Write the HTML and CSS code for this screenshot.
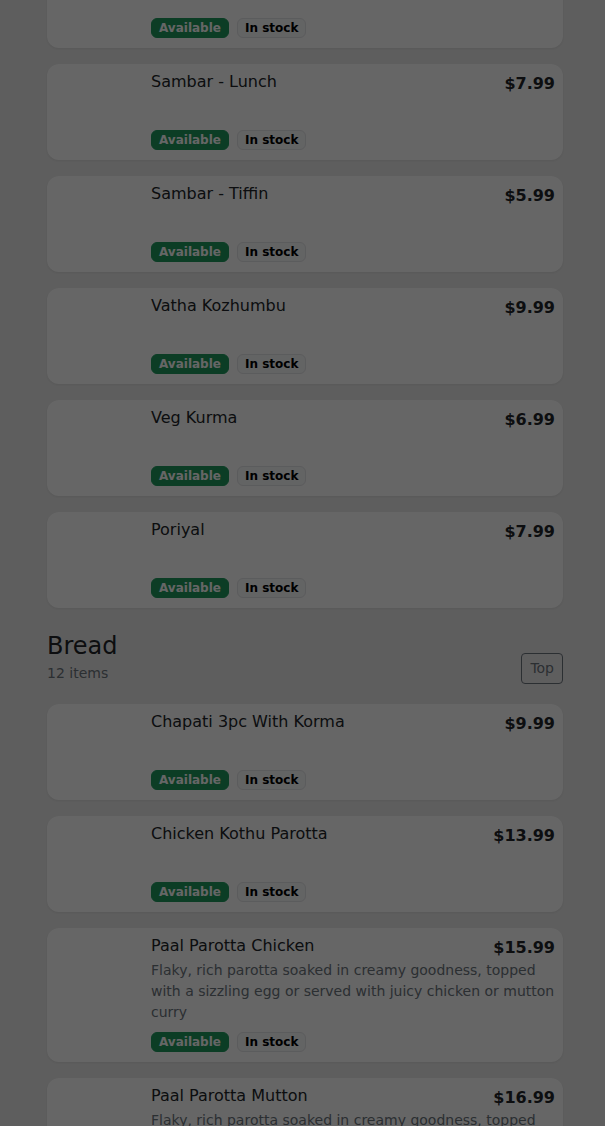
FILE: index.html
```html
<!DOCTYPE html>
<html lang="en">
<head>
    <meta charset="UTF-8">
    <meta name="viewport" content="width=device-width, initial-scale=1.0">
    <title>Menu</title>
    <link rel="stylesheet" href="styles.css">
</head>
<body>

    <main class="menu">

        <!-- Curries -->
        <section class="category">
            <div class="item-list first">
                <div class="item">
                    <div class="item-img"></div>
                    <div class="item-body">
                        <div class="item-head">
                            <span class="item-name">Rasam</span>
                            <span class="item-price">$5.99</span>
                        </div>
                        <div class="badges">
                            <span class="badge badge-ok">Available</span>
                            <span class="badge badge-light">In stock</span>
                        </div>
                    </div>
                </div>
                <div class="item">
                    <div class="item-img"></div>
                    <div class="item-body">
                        <div class="item-head">
                            <span class="item-name">Sambar - Lunch</span>
                            <span class="item-price">$7.99</span>
                        </div>
                        <div class="badges">
                            <span class="badge badge-ok">Available</span>
                            <span class="badge badge-light">In stock</span>
                        </div>
                    </div>
                </div>
                <div class="item">
                    <div class="item-img"></div>
                    <div class="item-body">
                        <div class="item-head">
                            <span class="item-name">Sambar - Tiffin</span>
                            <span class="item-price">$5.99</span>
                        </div>
                        <div class="badges">
                            <span class="badge badge-ok">Available</span>
                            <span class="badge badge-light">In stock</span>
                        </div>
                    </div>
                </div>
                <div class="item">
                    <div class="item-img"></div>
                    <div class="item-body">
                        <div class="item-head">
                            <span class="item-name">Vatha Kozhumbu</span>
                            <span class="item-price">$9.99</span>
                        </div>
                        <div class="badges">
                            <span class="badge badge-ok">Available</span>
                            <span class="badge badge-light">In stock</span>
                        </div>
                    </div>
                </div>
                <div class="item">
                    <div class="item-img"></div>
                    <div class="item-body">
                        <div class="item-head">
                            <span class="item-name">Veg Kurma</span>
                            <span class="item-price">$6.99</span>
                        </div>
                        <div class="badges">
                            <span class="badge badge-ok">Available</span>
                            <span class="badge badge-light">In stock</span>
                        </div>
                    </div>
                </div>
                <div class="item">
                    <div class="item-img"></div>
                    <div class="item-body">
                        <div class="item-head">
                            <span class="item-name">Poriyal</span>
                            <span class="item-price">$7.99</span>
                        </div>
                        <div class="badges">
                            <span class="badge badge-ok">Available</span>
                            <span class="badge badge-light">In stock</span>
                        </div>
                    </div>
                </div>
            </div>
        </section>

        <!-- Bread -->
        <section class="category">
            <div class="category-head">
                <div>
                    <h2>Bread</h2>
                    <p class="count">12 items</p>
                </div>
                <button class="btn-top">Top</button>
            </div>
            <div class="item-list">
                <div class="item">
                    <div class="item-img"></div>
                    <div class="item-body">
                        <div class="item-head">
                            <span class="item-name">Chapati 3pc With Korma</span>
                            <span class="item-price">$9.99</span>
                        </div>
                        <div class="badges">
                            <span class="badge badge-ok">Available</span>
                            <span class="badge badge-light">In stock</span>
                        </div>
                    </div>
                </div>
                <div class="item">
                    <div class="item-img"></div>
                    <div class="item-body">
                        <div class="item-head">
                            <span class="item-name">Chicken Kothu Parotta</span>
                            <span class="item-price">$13.99</span>
                        </div>
                        <div class="badges">
                            <span class="badge badge-ok">Available</span>
                            <span class="badge badge-light">In stock</span>
                        </div>
                    </div>
                </div>
                <div class="item">
                    <div class="item-img"></div>
                    <div class="item-body">
                        <div class="item-head">
                            <span class="item-name">Paal Parotta Chicken</span>
                            <span class="item-price">$15.99</span>
                        </div>
                        <p class="item-desc">Flaky, rich parotta soaked in creamy goodness, topped with a sizzling egg or served with juicy chicken or mutton curry</p>
                        <div class="badges">
                            <span class="badge badge-ok">Available</span>
                            <span class="badge badge-light">In stock</span>
                        </div>
                    </div>
                </div>
                <div class="item">
                    <div class="item-img"></div>
                    <div class="item-body">
                        <div class="item-head">
                            <span class="item-name">Paal Parotta Mutton</span>
                            <span class="item-price">$16.99</span>
                        </div>
                        <p class="item-desc">Flaky, rich parotta soaked in creamy goodness, topped with a sizzling egg or served with juicy chicken or mutton curry</p>
                        <div class="badges">
                            <span class="badge badge-ok">Available</span>
                            <span class="badge badge-light">In stock</span>
                        </div>
                    </div>
                </div>
            </div>
        </section>

    </main>

    <!-- Dim backdrop (modal open) -->
    <div class="backdrop"></div>

</body>
</html>
```

FILE: styles.css
```css
body {
    font-family: "DejaVu Sans", sans-serif;
    margin: 0;
    padding: 0;
    background-color: #ececec;
    color: #212529;
}

.menu {
    padding: 0 42px 40px 47px;
}

.item-list {
    display: flex;
    flex-direction: column;
    gap: 16px;
}

.item-list.first {
    margin-top: -48px;
}

.item {
    display: flex;
    gap: 16px;
    padding: 8px;
    background-color: #fff;
    border-radius: 12px;
    box-shadow: 0 1px 3px rgba(0, 0, 0, 0.08);
}

.item-img {
    flex: 0 0 80px;
    height: 80px;
    border-radius: 8px;
}

.item-body {
    flex: 1;
    display: flex;
    flex-direction: column;
    min-width: 0;
}

.item-head {
    display: flex;
    justify-content: space-between;
    align-items: flex-start;
    gap: 8px;
}

.item-name {
    font-size: 16px;
    line-height: 1.25;
}

.item-price {
    font-size: 16px;
    font-weight: bold;
    line-height: 1.25;
    margin-top: 2px;
    margin-bottom: -2px;
}

.item-desc {
    margin: 4px 0 0;
    font-size: 14px;
    line-height: 1.5;
    color: #6c757d;
}

.badges {
    display: flex;
    gap: 8px;
    margin-top: auto;
    padding-top: 9px;
    padding-bottom: 2px;
}

.badge {
    display: inline-block;
    font-size: 12px;
    font-weight: bold;
    line-height: 1;
    padding: 3px 7px;
    border-radius: 6px;
}

.badge-ok {
    background-color: #1e9a5e;
    color: #fff;
    border: 1px solid #1e9a5e;
}

.badge-light {
    background-color: #f8f9fa;
    color: #000;
    border: 1px solid #e3e5e8;
}

.category-head {
    display: flex;
    justify-content: space-between;
    align-items: flex-end;
    padding: 24px 0 20px;
}

.category-head h2 {
    margin: 0 0 2px;
    font-size: 24px;
    font-weight: normal;
    line-height: 1.2;
}

.count {
    margin: 0;
    font-size: 14px;
    line-height: 1.5;
    color: #6c757d;
}

.btn-top {
    font-family: inherit;
    font-size: 14px;
    line-height: 1.5;
    padding: 4px 8px;
    background: transparent;
    color: #6c757d;
    border: 1px solid #6c757d;
    border-radius: 4px;
}

.backdrop {
    position: fixed;
    top: 0;
    left: 0;
    width: 100%;
    height: 100%;
    background-color: rgba(0, 0, 0, 0.6);
}
```
